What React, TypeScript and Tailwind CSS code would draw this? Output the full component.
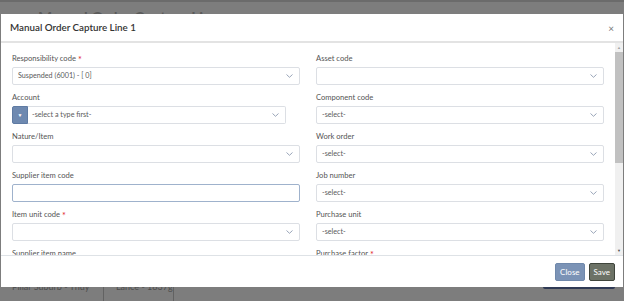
import React from "react";

type Field = {
  label: string;
  required?: boolean;
  value?: string;
  kind?: "select" | "input" | "account";
};

const fields: Field[] = [
  { label: "Responsibility code", required: true, value: "Suspended (6001) - [ 0]" },
  { label: "Asset code", value: "" },
  { label: "Account", value: "-select a type first-", kind: "account" },
  { label: "Component code", value: "-select-" },
  { label: "Nature/Item", value: "" },
  { label: "Work order", value: "-select-" },
  { label: "Supplier item code", kind: "input" },
  { label: "Job number", value: "-select-" },
  { label: "Item unit code", required: true, value: "" },
  { label: "Purchase unit", value: "-select-" },
  { label: "Supplier item name" },
  { label: "Purchase factor", required: true },
];

const Chevron = () => (
  <svg width="7" height="4" viewBox="0 0 7 4" className="shrink-0">
    <path d="M0.5 0.5 L3.5 3.3 L6.5 0.5" fill="none" stroke="#8d9bb0" strokeWidth="0.9" />
  </svg>
);

const SelectBox = ({ value }: { value?: string }) => (
  <div className="flex h-[18px] items-center justify-between rounded-[2px] border border-[#dcdfe4] bg-white pl-[5px] pr-[6px]">
    <span className="text-[7.2px] text-[#5a5a5a]">{value}</span>
    <Chevron />
  </div>
);

const FieldRow = ({ field }: { field: Field }) => (
  <div className="flex flex-col">
    <div className="flex h-[12px] items-center gap-[2px] text-[7.6px] text-[#555]">
      <span>{field.label}</span>
      {field.required && <span className="text-[9px] leading-none text-[#e0242a]">*</span>}
    </div>
    <div className="mt-[2px] mb-[7px]">
      {field.kind === "input" ? (
        <div className="h-[18px] rounded-[2px] border border-[#9fb2cc] bg-white" />
      ) : field.kind === "account" ? (
        <div className="flex h-[18px] w-[274px]">
          <div className="flex w-[16px] items-center justify-center rounded-l-[2px] border border-[#5f7ba3] bg-[#6e89b0]">
            <span className="text-[5px] leading-none text-white">▼</span>
          </div>
          <div className="flex flex-1 items-center justify-between rounded-r-[2px] border border-l-0 border-[#dcdfe4] bg-white pl-[4px] pr-[6px]">
            <span className="text-[7.2px] text-[#5a5a5a]">{field.value}</span>
            <Chevron />
          </div>
        </div>
      ) : (
        <SelectBox value={field.value} />
      )}
    </div>
  </div>
);

const App: React.FC = () => {
  return (
    <div
      className="relative h-[301px] w-[624px] overflow-hidden bg-[#7d7d7d]"
      style={{ fontFamily: "Lato, 'Noto Sans', sans-serif" }}
    >
      {/* page behind the dialog */}
      <div className="h-[2px] bg-[#6b6b6b]" />
      <div className="pl-[38px] pt-[8px] text-[15px] font-bold leading-none text-[#5a5a5a]">
        Manual Order Capture Lines
      </div>
      <div className="absolute left-0 top-[280px] flex h-[21px] w-full text-[9px] text-[#4e4e4e]">
        <div className="w-[104px] border-r border-[#626262] pl-[12px]">Pillar Suburb - Thuy</div>
        <div className="w-[70px] border-r border-[#626262] pl-[12px]">Lance - 1837g</div>
        <div className="flex-1" />
      </div>
      <div className="absolute left-[543px] top-[285px] h-[4px] w-[72px] rounded-b-[2px] bg-[#2f3a55]" />

      {/* dialog */}
      <div className="absolute left-[1px] top-[14px] flex w-[622px] flex-col bg-white">
        <div className="flex h-[29px] items-center justify-between border-b-2 border-[#e3e3e3] pl-[9px] pr-[9px]">
          <span className="text-[9.8px] font-semibold text-[#333]">Manual Order Capture Line 1</span>
          <span className="text-[10px] leading-none text-[#777]">×</span>
        </div>
        <div className="flex h-[212px]">
          <div className="flex-1 overflow-hidden pl-[11px] pr-[11px] pt-[10px]">
            <div className="grid grid-cols-2 gap-x-[16px]">
              {fields.map((f) => (
                <FieldRow key={f.label} field={f} />
              ))}
            </div>
          </div>
          <div className="flex w-[8px] flex-col bg-[#f0f0f0]">
            <div className="flex h-[9px] items-center justify-center">
              <span className="text-[4px] leading-none text-[#a3a3a3]">▲</span>
            </div>
            <div className="h-[111px] bg-[#c1c1c1]" />
            <div className="flex-1" />
            <div className="flex h-[9px] items-center justify-center">
              <span className="text-[4px] leading-none text-[#505050]">▼</span>
            </div>
          </div>
        </div>
        <div className="flex h-[32px] items-center justify-end gap-[4px] border-t border-[#dee2e6] pr-[8px]">
          <button className="h-[18px] rounded-[2px] border border-[#6f88ab] bg-[#7b93b6] px-[4px] text-[8px] text-white">
            Close
          </button>
          <button className="h-[18px] rounded-[2px] border border-[#3f453c] bg-[#6c7266] px-[4px] text-[8px] text-white">
            Save
          </button>
        </div>
      </div>
    </div>
  );
};

export default App;
